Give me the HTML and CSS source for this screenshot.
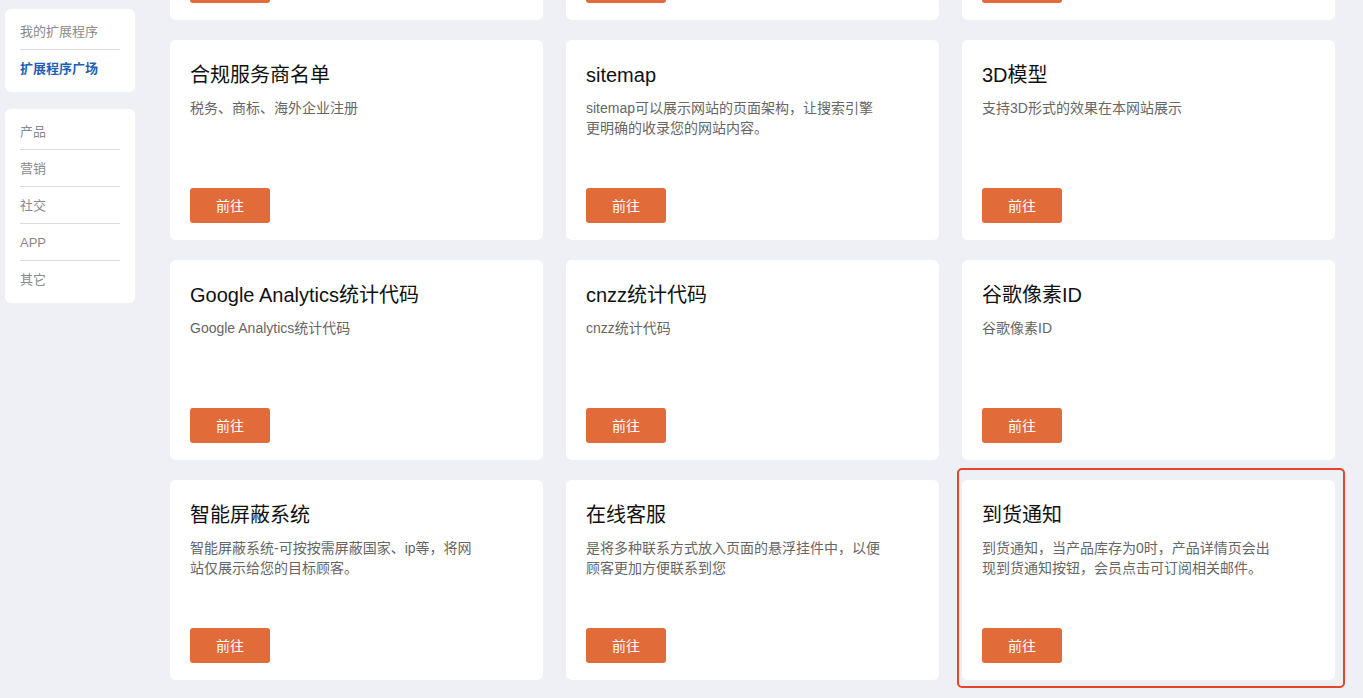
FILE: index.html
```html
<!DOCTYPE html>
<html lang="zh-CN">
<head>
<meta charset="utf-8">
<title>扩展程序广场</title>
<link rel="stylesheet" href="styles.css">
</head>
<body>
<div class="page">
  <aside class="sidebar">
    <nav class="side-card">
      <a class="side-item">我的扩展程序</a>
      <a class="side-item active">扩展程序广场</a>
    </nav>
    <nav class="side-card">
      <a class="side-item">产品</a>
      <a class="side-item">营销</a>
      <a class="side-item">社交</a>
      <a class="side-item">APP</a>
      <a class="side-item">其它</a>
    </nav>
  </aside>
  <main class="grid">
    <div class="card"><h3 class="title">&nbsp;</h3><p class="desc"></p><button class="btn">前往</button></div>
    <div class="card"><h3 class="title">&nbsp;</h3><p class="desc"></p><button class="btn">前往</button></div>
    <div class="card"><h3 class="title">&nbsp;</h3><p class="desc"></p><button class="btn">前往</button></div>

    <div class="card"><h3 class="title">合规服务商名单</h3><p class="desc">税务、商标、海外企业注册</p><button class="btn">前往</button></div>
    <div class="card"><h3 class="title">sitemap</h3><p class="desc">sitemap可以展示网站的页面架构，让搜索引擎更明确的收录您的网站内容。</p><button class="btn">前往</button></div>
    <div class="card"><h3 class="title">3D模型</h3><p class="desc">支持3D形式的效果在本网站展示</p><button class="btn">前往</button></div>

    <div class="card"><h3 class="title">Google Analytics统计代码</h3><p class="desc">Google Analytics统计代码</p><button class="btn">前往</button></div>
    <div class="card"><h3 class="title">cnzz统计代码</h3><p class="desc">cnzz统计代码</p><button class="btn">前往</button></div>
    <div class="card"><h3 class="title">谷歌像素ID</h3><p class="desc">谷歌像素ID</p><button class="btn">前往</button></div>

    <div class="card"><h3 class="title">智能屏蔽系统</h3><p class="desc">智能屏蔽系统-可按按需屏蔽国家、ip等，将网站仅展示给您的目标顾客。</p><button class="btn">前往</button></div>
    <div class="card"><h3 class="title">在线客服</h3><p class="desc">是将多种联系方式放入页面的悬浮挂件中，以便顾客更加方便联系到您</p><button class="btn">前往</button></div>
    <div class="card highlighted"><h3 class="title">到货通知</h3><p class="desc">到货通知，当产品库存为0时，产品详情页会出现到货通知按钮，会员点击可订阅相关邮件。</p><button class="btn">前往</button></div>
  </main>
</div>
</body>
</html>
```

FILE: styles.css
```css
* { box-sizing: border-box; }
html, body { margin: 0; padding: 0; }
body {
  background: #eef0f5;
  font-family: "Liberation Sans", "Noto Sans CJK SC", sans-serif;
  color: #111;
  overflow: hidden;
  height: 698px;
}
.page {
  display: flex;
  align-items: flex-start;
  gap: 35px;
  padding-left: 5px;
}
.sidebar {
  width: 130px;
  flex: none;
  display: flex;
  flex-direction: column;
  gap: 17px;
  padding-top: 9px;
}
.side-card {
  background: #fff;
  border-radius: 6px;
  padding: 4px 15px 5px;
  display: flex;
  flex-direction: column;
}
.side-item {
  display: block;
  font-size: 13px;
  line-height: 37px;
  height: 37px;
  color: #8a8a8a;
  border-bottom: 1px solid #dcdcdc;
}
.side-item:last-child { border-bottom: none; }
.side-item.active {
  color: #1f5fb8;
  font-weight: bold;
}
.grid {
  flex: 1;
  margin-right: 28px;
  margin-top: -180px;
  display: grid;
  grid-template-columns: repeat(3, 1fr);
  column-gap: 23px;
  row-gap: 20px;
}
.card {
  position: relative;
  background: #fff;
  border-radius: 6px;
  height: 200px;
  padding: 22px 20px 17px;
  display: flex;
  flex-direction: column;
  align-items: flex-start;
}
.title {
  margin: 0;
  font-size: 20px;
  line-height: 26px;
  font-weight: normal;
  color: #111;
}
.desc {
  margin: 10px 0 0;
  font-size: 14px;
  line-height: 20px;
  color: #666;
  max-width: 295px;
  flex: 1;
}
.btn {
  width: 80px;
  height: 35px;
  border: none;
  border-radius: 3px;
  background: #e16c3a;
  color: #fff;
  font-family: inherit;
  font-size: 14px;
  padding: 0 0 1px;
}
.highlighted::after {
  content: "";
  position: absolute;
  left: -5px;
  right: -10px;
  top: -12px;
  bottom: -8px;
  border: 2px solid #e8432c;
  border-radius: 5px;
  pointer-events: none;
}
```
